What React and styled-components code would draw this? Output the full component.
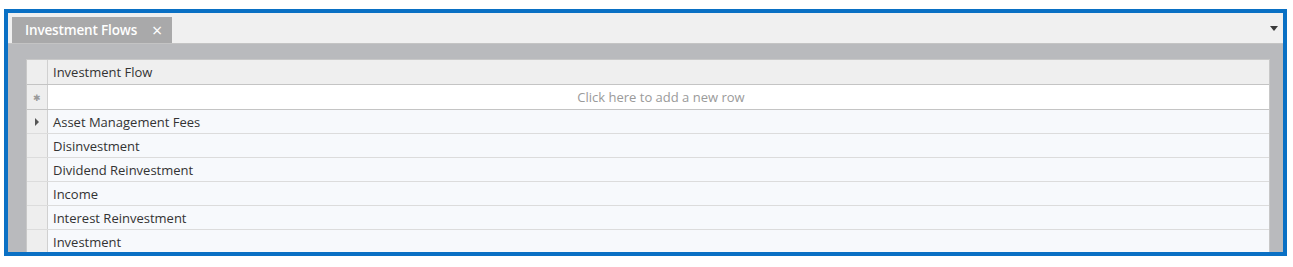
import styled, { createGlobalStyle } from "styled-components";

const GlobalStyle = createGlobalStyle`
    html, body {
        margin: 0;
        padding: 0;
        background: #fff;
    }
    body {
        font-family: "Open Sans", "Noto Sans", sans-serif;
    }
`;

const flows = [
    "Asset Management Fees",
    "Disinvestment",
    "Dividend Reinvestment",
    "Income",
    "Interest Reinvestment",
    "Investment",
];

const App = () => {
    return (
        <>
            <GlobalStyle />
            <Page>
                <Frame>
                    <TabStrip>
                        <Tab>
                            <span>Investment Flows</span>
                            <Close>×</Close>
                        </Tab>
                        <Menu />
                    </TabStrip>
                    <Body>
                        <Grid>
                            <Row $tall>
                                <Selector />
                                <Cell $header>Investment Flow</Cell>
                            </Row>
                            <Row $tall>
                                <Selector><Star>✱</Star></Selector>
                                <Cell $new>Click here to add a new row</Cell>
                            </Row>
                            {flows.map((name, i) => (
                                <Row key={name}>
                                    <Selector>{i === 0 && <Pointer />}</Selector>
                                    <Cell>{name}</Cell>
                                </Row>
                            ))}
                        </Grid>
                    </Body>
                </Frame>
            </Page>
        </>
    );
};

const Page = styled.div`
    width: 1293px;
    height: 267px;
    padding: 9px 0 0 4px;
    box-sizing: border-box;
`;

const Frame = styled.div`
    width: 1283px;
    height: 247px;
    box-sizing: border-box;
    border: 4px solid #0a70c4;
    display: flex;
    flex-direction: column;
    overflow: hidden;
    background: #b9babd;
`;

const TabStrip = styled.div`
    height: 31px;
    flex-shrink: 0;
    background: #f0f0f0;
    border-bottom: 1px solid #c4c4c4;
    display: flex;
    align-items: flex-end;
    justify-content: space-between;
    padding-left: 4px;
    box-sizing: border-box;
`;

const Tab = styled.div`
    height: 26px;
    width: 160px;
    box-sizing: border-box;
    background: #a9a9aa;
    color: #fff;
    font-size: 13.5px;
    font-weight: 600;
    display: flex;
    align-items: center;
    padding-left: 13px;
    gap: 15px;
    letter-spacing: -0.15px;
`;

const Close = styled.span`
    font-weight: 400;
    font-size: 18px;
    line-height: 1;
`;

const Menu = styled.div`
    align-self: center;
    margin-right: 5px;
    width: 0;
    height: 0;
    border-left: 4px solid transparent;
    border-right: 4px solid transparent;
    border-top: 5px solid #3a3a3a;
`;

const Body = styled.div`
    flex: 1;
    padding: 15px 13px 0 18px;
    overflow: hidden;
`;

const Grid = styled.div`
    background: #f7f9fc;
    border-left: 1px solid #c8c8c8;
    border-right: 1px solid #c8c8c8;
    border-top: 1px solid #c8c8c8;
`;

const Row = styled.div`
    display: flex;
    height: ${p => (p.$tall ? "24px" : "23px")};
    border-bottom: 1px solid ${p => (p.$tall ? "#c4c4c4" : "#dcdcdc")};
`;

const Selector = styled.div`
    width: 20px;
    flex-shrink: 0;
    background: #eeeeee;
    border-right: 1px solid #d0d0d0;
    display: flex;
    align-items: center;
    justify-content: center;
`;

const Star = styled.span`
    font-size: 9px;
    color: #9a9a9a;
`;

const Pointer = styled.span`
    width: 0;
    height: 0;
    border-top: 4px solid transparent;
    border-bottom: 4px solid transparent;
    border-left: 4px solid #555;
`;

const Cell = styled.div`
    flex: 1;
    display: flex;
    align-items: center;
    padding-left: 5px;
    font-size: 13px;
    color: #333;
    justify-content: ${p => (p.$new ? "center" : "flex-start")};
    background: ${p => (p.$header ? "#efefef" : p.$new ? "#ffffff" : "transparent")};
    ${p => p.$new && "color: #9a9a9a;"}
`;

export default App;
